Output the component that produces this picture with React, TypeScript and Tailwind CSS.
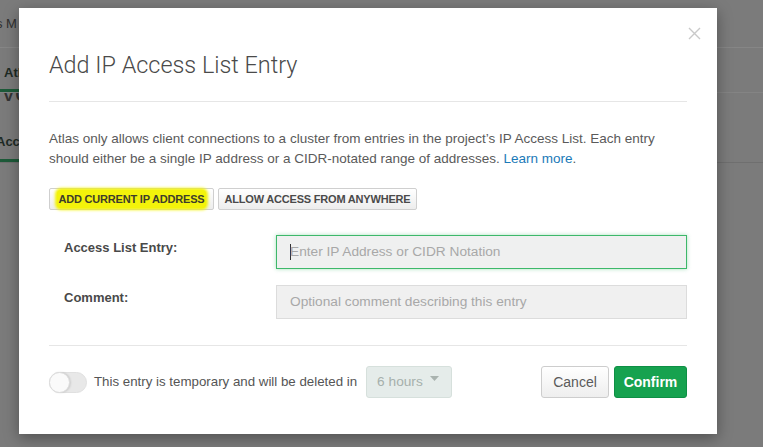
import React from "react";

export default function App() {
  return (
    <div className="relative w-[763px] h-[447px] overflow-hidden bg-[#7b7b7b] font-['Liberation_Sans',Arial,sans-serif]">
      {/* dimmed page behind the overlay */}
      <div className="flex flex-col">
        <div className="h-[48px] border-b border-[#868686] flex items-center">
          <span className="ml-[-4px] text-[13px] text-[#2f2f2f]">s M</span>
        </div>
        <div className="h-[45px] flex items-end border-b border-[#848484]">
          <div className="w-[40px] border-b-[3px] border-[#1d5a39] pb-[5px]">
            <span className="ml-[4px] text-[13px] font-bold text-[#1e2a24]">Atl</span>
          </div>
        </div>
        <div className="h-[70px] border-b border-[#6f6f6f] flex flex-col">
          <div className="h-[8px] overflow-hidden">
            <span className="ml-[2px] text-[26px] leading-[10px] text-[#333] block mt-[-6px]">vo</span>
          </div>
          <div className="flex-1 flex items-end">
            <div className="w-[30px] border-b-[3px] border-[#1d5a39] pb-[6px]">
              <span className="ml-[-4px] text-[13px] font-bold text-[#1e2a24]">Acce</span>
            </div>
          </div>
        </div>
      </div>

      {/* modal */}
      <div className="absolute left-[19px] top-[8px] w-[698px] h-[426px] bg-white shadow-[0_4px_14px_rgba(0,0,0,0.35)] px-[30px] flex flex-col text-[#555]">
        <button className="absolute right-[16px] top-[19px] w-[13px] h-[13px]">
          <svg width="13" height="13" viewBox="0 0 13 13">
            <path d="M1 1 L12 12 M12 1 L1 12" stroke="#c9c9c9" strokeWidth="1.4" fill="none" />
          </svg>
        </button>

        <div className="pt-[42px] pb-[21px] border-b border-[#e6e6e6]">
          <h2 className="text-[23.4px] leading-[30px] font-light text-[#4a4a4a] font-['Roboto',sans-serif]">
            Add IP Access List Entry
          </h2>
        </div>

        <p className="mt-[27px] text-[13.5px] leading-[20px] text-[#5a5a5a]">
          Atlas only allows client connections to a cluster from entries in the project’s IP Access List. Each entry should either be a single IP address or a CIDR-notated range of addresses.{" "}
          <span className="text-[#1b7ab8]">Learn more</span>.
        </p>

        <div className="mt-[19px] flex gap-[4px]">
          <button className="h-[22px] w-[165px] flex items-center justify-center border border-[#cfcfcf] rounded-[2px] bg-gradient-to-b from-white to-[#ededed]">
            <span className="bg-[#f3f30a] rounded-[4px] px-[2px] py-[2px] text-[11px] leading-[14px] font-bold text-[#3d3d2a] tracking-[-0.2px] shadow-[0_0_3px_2px_#f3f30a]">
              ADD CURRENT IP ADDRESS
            </span>
          </button>
          <button className="h-[22px] w-[199px] flex items-center justify-center border border-[#cfcfcf] rounded-[2px] bg-gradient-to-b from-white to-[#ededed] text-[11px] font-bold text-[#4a4a4a] tracking-[-0.2px]">
            ALLOW ACCESS FROM ANYWHERE
          </button>
        </div>

        <div className="mt-[25px] flex flex-col gap-[16px]">
          <div className="flex">
            <label className="w-[227px] pl-[15px] pt-[3px] text-[13px] font-bold text-[#494949]">Access List Entry:</label>
            <div className="flex-1 h-[34px] border border-[#3db86a] bg-[#eff0f0] shadow-[0_0_4px_rgba(61,184,106,0.45)] flex items-center pl-[13px]">
              <span className="w-[1px] h-[16px] bg-[#333] mr-[-1px]"></span>
              <span className="text-[13.7px] text-[#a8a8a8]">Enter IP Address or CIDR Notation</span>
            </div>
          </div>
          <div className="flex">
            <label className="w-[227px] pl-[15px] pt-[3px] text-[13px] font-bold text-[#494949]">Comment:</label>
            <div className="flex-1 h-[34px] border border-[#dcdcdc] bg-[#f0f0f0] flex items-center pl-[13px]">
              <span className="text-[13.7px] text-[#a8a8a8]">Optional comment describing this entry</span>
            </div>
          </div>
        </div>

        <div className="mt-[26px] border-t border-[#e6e6e6]"></div>

        <div className="mt-[20px] flex items-center">
          <div className="w-[38px] h-[21px] rounded-full bg-[#e8e8e8] border border-[#e0e0e0] flex items-center">
            <div className="w-[21px] h-[21px] rounded-full bg-[#fafafa] border border-[#dcdcdc] shadow-[1px_0_2px_rgba(0,0,0,0.12)] ml-[-1px]"></div>
          </div>
          <span className="ml-[7px] text-[13.3px] text-[#555]">This entry is temporary and will be deleted in</span>
          <div className="ml-[9px] h-[32px] w-[86px] rounded-[3px] border border-[#d6e0dc] bg-[#e5ecea] flex items-center pl-[10px] pr-[12px] justify-between">
            <span className="text-[13.7px] text-[#a6b0ac]">6 hours</span>
            <svg width="9" height="6" viewBox="0 0 9 6" className="mt-[-6px]">
              <path d="M0 0 L9 0 L4.5 5 Z" fill="#a9b3af" />
            </svg>
          </div>
          <div className="ml-auto flex gap-[5px]">
            <button className="h-[32px] w-[68px] rounded-[3px] border border-[#cdcdcd] bg-gradient-to-b from-white to-[#eeeeee] text-[14px] text-[#5a5a5a]">
              Cancel
            </button>
            <button className="h-[32px] w-[73px] rounded-[3px] border border-[#0e8f45] bg-[#16a24f] text-[14px] font-bold text-white">
              Confirm
            </button>
          </div>
        </div>
      </div>
    </div>
  );
}
